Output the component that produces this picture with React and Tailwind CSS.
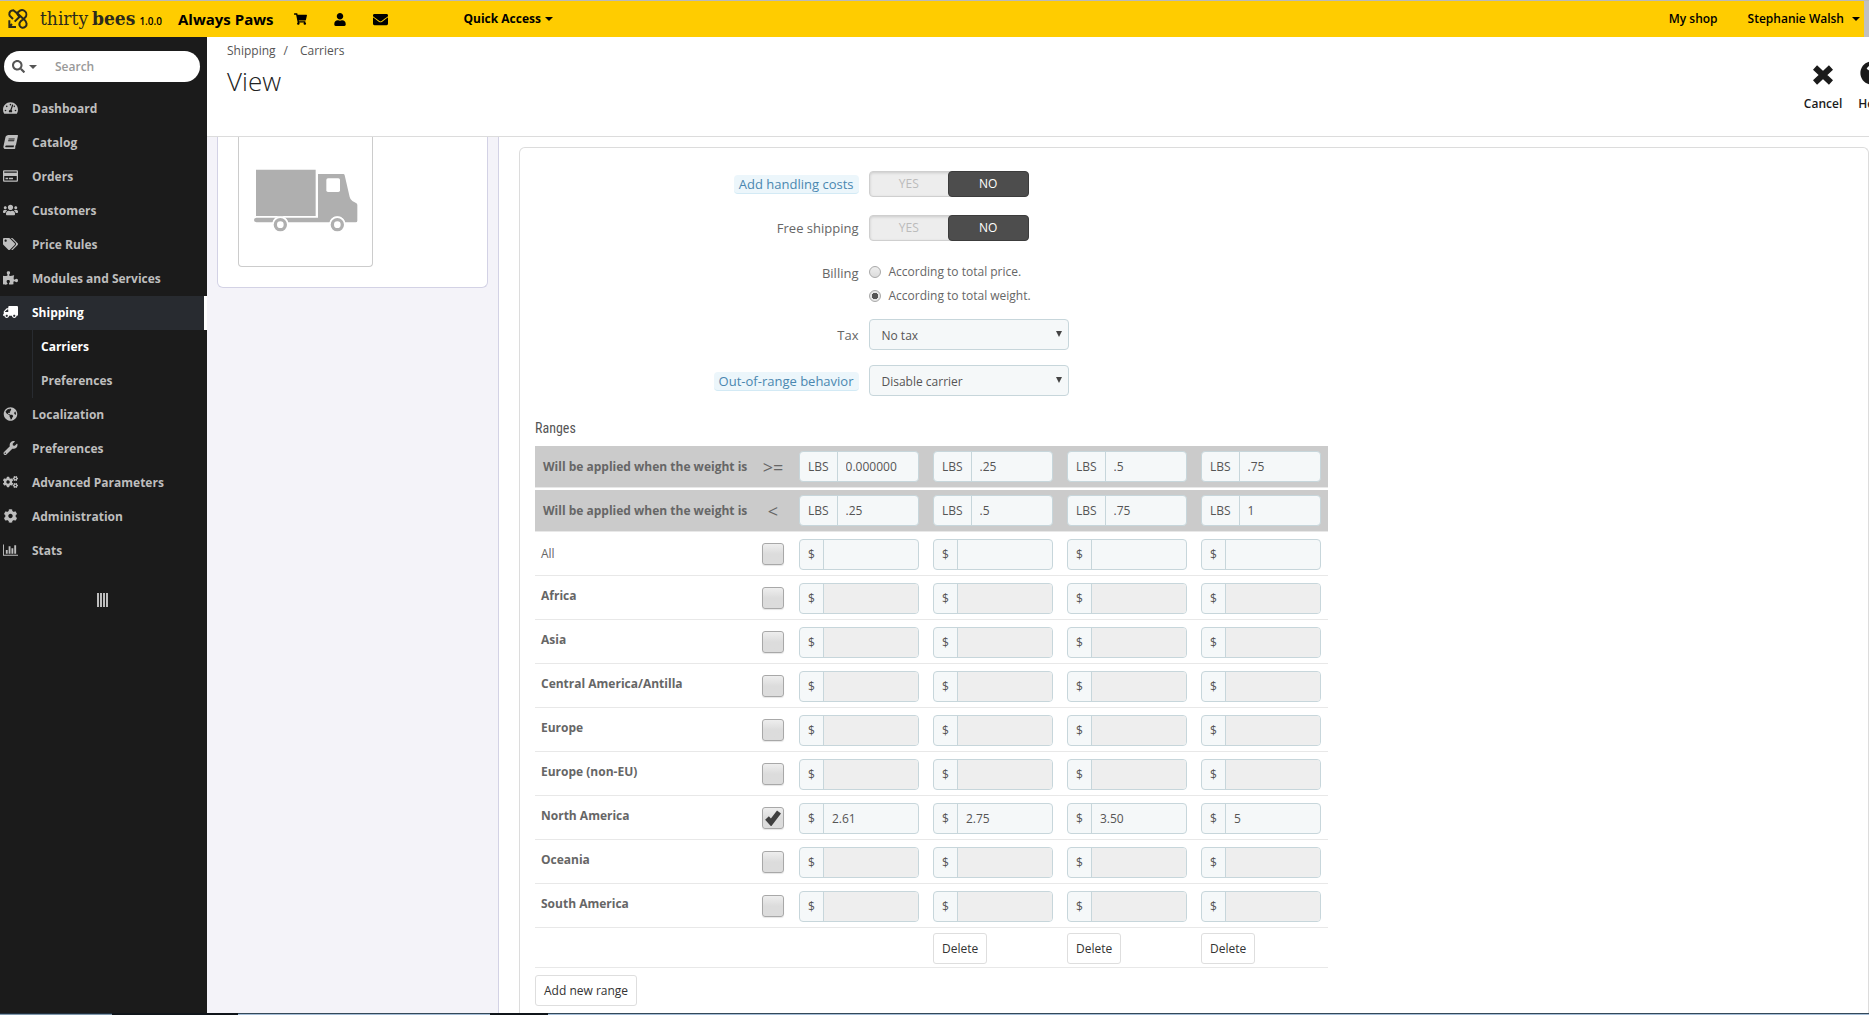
import React, { useState } from "react";
import clsx from "clsx";
import {
    FaBook,
    FaCog,
    FaCogs,
    FaEnvelope,
    FaGlobeAmericas,
    FaPuzzlePiece,
    FaQuestionCircle,
    FaRegCreditCard,
    FaSearch,
    FaShoppingCart,
    FaTachometerAlt,
    FaTags,
    FaTruck,
    FaUser,
    FaUsers,
    FaWrench,
} from "react-icons/fa";

const StatsIcon = ({ className }) => (
    <svg viewBox="0 0 16 12" fill="currentColor" className={className}>
        <path d="M0 0h1v11h15v1H0zM3 6h2v4H3zM6 2h2v8H6zM9 4h2v6H9zM12 1h2v9h-2z" />
    </svg>
);

const MENU = [
    { label: "Dashboard", icon: FaTachometerAlt },
    { label: "Catalog", icon: FaBook, iconClass: "-skew-x-12" },
    { label: "Orders", icon: FaRegCreditCard },
    { label: "Customers", icon: FaUsers },
    { label: "Price Rules", icon: FaTags },
    { label: "Modules and Services", icon: FaPuzzlePiece },
    { label: "Shipping", icon: FaTruck, iconClass: "-scale-x-100", children: ["Carriers", "Preferences"] },
    { label: "Localization", icon: FaGlobeAmericas },
    { label: "Preferences", icon: FaWrench },
    { label: "Advanced Parameters", icon: FaCogs },
    { label: "Administration", icon: FaCog },
    { label: "Stats", icon: StatsIcon },
];

const RANGES = [
    { from: "0.000000", to: ".25" },
    { from: ".25", to: ".5" },
    { from: ".5", to: ".75" },
    { from: ".75", to: "1" },
];

const ZONES = [
    { name: "Africa" },
    { name: "Asia" },
    { name: "Central America/Antilla" },
    { name: "Europe" },
    { name: "Europe (non-EU)" },
    { name: "North America", fees: ["2.61", "2.75", "3.50", "5"] },
    { name: "Oceania" },
    { name: "South America" },
];

const Caret = ({ className }) => (
    <svg viewBox="0 0 8 4" fill="currentColor" className={clsx("h-1 w-2", className)}>
        <path d="M0 0h8L4 4z" />
    </svg>
);

const LogoMark = () => (
    <svg viewBox="0 0 60 60" fill="none" stroke="#2b2a1c" strokeWidth="6" className="h-5 w-5">
        <path d="M4 18C3 9 8 4 16 4l10 8 8 12-14 14" />
        <path d="M3 18l12 12M27 12l9-7c5-3 12-1 16 3s4 12 0 17l-8 7" />
        <path d="M27 12l22 20c8 8 9 16 3 21s-14 4-17-3c-2-5-1-9 3-13l6-5" />
        <path d="M4 34v20h20M4 54l8-9" />
    </svg>
);

const TruckPicture = () => (
    <svg viewBox="160 148 312 189" fill="#afafaf" className="h-[63px] w-[104px]">
        <path d="M166 150h179v139H166z" />
        <path d="M352 163h76q3 0 4 4l15 65q2 8 8 12l11 6q4 2 4 6v47q0 5-5 5h-32a24 24 0 0 0-46 0H262a24 24 0 0 0-46 0h-49q-7-1-7-7t7-7h185z" />
        <rect x="377" y="176" width="41" height="41" rx="5" fill="#fff" />
        <circle cx="239" cy="315" r="25" fill="#fff" />
        <circle cx="410" cy="315" r="25" fill="#fff" />
        <circle cx="239" cy="315" r="15" fill="none" stroke="#afafaf" strokeWidth="10" />
        <circle cx="410" cy="315" r="15" fill="none" stroke="#afafaf" strokeWidth="10" />
    </svg>
);

const TopBar = () => (
    <header className="flex h-[37px] border-t border-[#b9b9b9] bg-[#c0c0c0] pr-[5px] text-black">
        <div className="flex flex-1 items-center bg-[#ffcc00] pl-2">
            <LogoMark />
            <a href="#" className="ml-3 flex items-baseline text-[#2b2a1c]">
                <span className="font-['DejaVu_Serif_Condensed','DejaVu_Serif',serif] text-[19px]">thirty</span>
                <span className="ml-1 font-['DejaVu_Serif_Condensed','DejaVu_Serif',serif] text-[19px] font-bold">
                    bees
                </span>
                <span className="ml-1 text-[10px] font-semibold text-black">1.0.0</span>
            </a>
            <a href="#" className="ml-4 text-[15px] font-bold">
                Always Paws
            </a>
            <a href="#" aria-label="Orders" className="ml-5">
                <FaShoppingCart className="h-3 w-[13px]" />
            </a>
            <a href="#" aria-label="Customers" className="ml-[26px]">
                <FaUser className="h-[13px] w-[14px]" />
            </a>
            <a href="#" aria-label="Messages" className="ml-[26px]">
                <FaEnvelope className="h-[15px] w-[15px]" />
            </a>
            <button type="button" className="ml-[76px] flex items-center gap-1 font-bold">
                Quick Access <Caret />
            </button>
            <a href="#" className="ml-auto font-semibold">
                My shop
            </a>
            <button type="button" className="mr-1 ml-[30px] flex items-center gap-2 font-semibold">
                Stephanie Walsh <Caret />
            </button>
        </div>
    </header>
);

const SideBar = () => (
    <nav className="w-[207px] shrink-0 bg-[#1b1b1b] text-[#bebebe]">
        <div className="mr-[7px] mt-[14px] mb-[10px] ml-1 flex h-[31px] items-center rounded-full bg-white pl-2 text-[#555]">
            <FaSearch className="h-[13px] w-[13px] shrink-0" />
            <Caret className="ml-1 shrink-0" />
            <input
                type="text"
                aria-label="Search"
                placeholder="Search"
                className="ml-[18px] w-32 font-semibold outline-none placeholder:text-[#999]"
            />
        </div>
        <ul>
            {MENU.map(({ label, icon: Icon, iconClass, children }) => (
                <li key={label} className={clsx(children && "text-white")}>
                    <a
                        href="#"
                        className={clsx(
                            "flex h-[34px] items-center pl-[3px] font-bold",
                            children && "border-r-[3px] border-white bg-[#282b30]"
                        )}
                    >
                        <Icon className={clsx("mr-[14px] mb-[2px] h-[14px] w-[15px] shrink-0", iconClass)} />
                        {label}
                    </a>
                    {children && (
                        <ul className="ml-8 border-l border-[#282b30] text-[#bebebe]">
                            {children.map((child, i) => (
                                <li key={child}>
                                    <a
                                        href="#"
                                        className={clsx("flex h-[34px] items-center pl-2 font-bold", i === 0 && "text-white")}
                                    >
                                        {child}
                                    </a>
                                </li>
                            ))}
                        </ul>
                    )}
                </li>
            ))}
        </ul>
        <button type="button" aria-label="Collapse menu" className="mt-[25px] ml-[97px] flex h-[14px] gap-px">
            {[0, 1, 2, 3].map((n) => (
                <span key={n} className="h-full w-[2px] bg-[#bebebe]" />
            ))}
        </button>
    </nav>
);

const PageHead = () => (
    <div className="flex h-[100px] justify-between overflow-hidden border-b border-[#dcdcdc] bg-white pl-5">
        <div>
            <div className="mt-[6px] flex text-[#555]">
                <a href="#">Shipping</a>
                <span className="mr-3 ml-2">/</span>
                <a href="#">Carriers</a>
            </div>
            <h1 className="mt-1 text-[26px] leading-9 font-light text-[#222]">View</h1>
        </div>
        <div className="-mr-4 flex gap-4 pt-6 text-[#1b1b1b]">
            <a href="#" className="flex flex-col items-center font-semibold">
                <svg viewBox="0 0 20 20" stroke="currentColor" strokeWidth="6" className="mt-1 mb-[11px] h-5 w-5">
                    <path d="M2 2.500l16 15M18 2.500l-16 15" />
                </svg>
                Cancel
            </a>
            <a href="#" className="flex flex-col items-center font-semibold">
                <FaQuestionCircle className="mb-[11px] h-6 w-6" />
                Help
            </a>
        </div>
    </div>
);

const HintLabel = ({ hint, children }) =>
    hint ? (
        <span className="rounded-sm border-b border-[#d3eaf5] bg-[#ecf6fb] px-[5px] text-[#4a87b0]">{children}</span>
    ) : (
        children
    );

const FormRow = ({ label, htmlFor, hint, tall, className, children }) => (
    <div className={clsx("grid grid-cols-[25%_1fr]", className)}>
        <label
            htmlFor={htmlFor}
            className={clsx(
                "flex items-center justify-end pr-[6px] text-[13px] leading-[18px]",
                tall ? "h-8" : "h-[26px]"
            )}
        >
            <HintLabel hint={hint}>{label}</HintLabel>
        </label>
        <div className="pl-1">{children}</div>
    </div>
);

const YesNoSwitch = ({ name }) => {
    const [value, setValue] = useState("NO");

    return (
        <div className="relative flex h-[26px] w-40 rounded-sm border border-[#cfcfcf] bg-[#ededed] shadow-[inset_0_1px_3px_rgba(0,0,0,0.15)]">
            {["YES", "NO"].map((option) => (
                <label
                    key={option}
                    className={clsx(
                        "-my-px flex flex-1 items-center justify-center leading-4",
                        value === option ? "-mr-px rounded-sm border border-[#3c3c3c] bg-[#4d4d4d] text-white" : "text-[#bbb]"
                    )}
                >
                    <input
                        type="radio"
                        id={option === "YES" ? name : undefined}
                        name={name}
                        checked={value === option}
                        onChange={() => setValue(option)}
                        className="sr-only"
                    />
                    {option}
                </label>
            ))}
        </div>
    );
};

const SelectBox = ({ id, options }) => (
    <div className="relative w-[200px]">
        <select
            id={id}
            className="block h-[31px] w-full appearance-none rounded-sm border border-[#c7d6db] bg-[#f5f8f9] px-3 pt-[2px] text-[#555]"
        >
            {options.map((option) => (
                <option key={option}>{option}</option>
            ))}
        </select>
        <svg viewBox="0 0 6 6" fill="#444" className="pointer-events-none absolute top-3 right-[7px] h-[6px] w-[6px]">
            <path d="M0 0h6L3 6z" />
        </svg>
    </div>
);

const AddonInput = ({ addon, label, disabled, value = "" }) => (
    <div className="flex h-[31px] overflow-hidden rounded-sm border border-[#c7d6db] bg-[#f5f8f9] text-[#555]">
        <span className="flex items-center border-r border-[#c7d6db] px-2">{addon}</span>
        <input
            type="text"
            aria-label={label}
            defaultValue={value}
            disabled={disabled}
            className="min-w-0 flex-1 px-2 outline-none disabled:bg-[#eee]"
        />
    </div>
);

const ZoneCheckbox = ({ id, defaultChecked }) => (
    <span className="relative mx-auto block h-[22px] w-[22px]">
        <input
            type="checkbox"
            id={id}
            defaultChecked={defaultChecked}
            className="peer block h-full w-full appearance-none rounded-[3px] border border-[#a8a8a8] bg-linear-to-b from-[#eee] to-[#dcdcdc] to-50% shadow-[0_1px_1px_rgba(0,0,0,0.1)]"
        />
        <svg
            viewBox="0 0 16 16"
            fill="none"
            stroke="#3f3f3f"
            strokeWidth="5"
            className="pointer-events-none absolute top-[3px] left-[3px] hidden h-4 w-4 peer-checked:block"
        >
            <path d="M2 8l4 4.500L14 2" />
        </svg>
    </span>
);

const RangeHead = ({ symbol, field, className }) => (
    <tr>
        <th
            scope="row"
            className={clsx("border-b border-[#e8e8e8] bg-[#cbcbcb] bg-clip-padding pl-2 text-left font-bold", className)}
        >
            Will be applied when the weight is
        </th>
        <td className={clsx("border-b border-[#e8e8e8] bg-[#cbcbcb] bg-clip-padding text-center text-lg leading-6", className)}>
            {symbol}
        </td>
        {RANGES.map((range, i) => (
            <td
                key={i}
                className={clsx("border-b border-[#e8e8e8] bg-[#cbcbcb] bg-clip-padding px-[7px] py-[5px] text-xs", className)}
            >
                <AddonInput addon="LBS" label={`Range ${i + 1} weight ${symbol}`} value={range[field]} />
            </td>
        ))}
    </tr>
);

const RangesTable = () => (
    <table className="w-[793px] table-fixed border-separate border-spacing-0 text-[#666]">
        <colgroup>
            <col />
            <col className="w-[38px]" />
            {RANGES.map((_, i) => (
                <col key={i} className="w-[134px]" />
            ))}
        </colgroup>
        <tbody>
            <RangeHead symbol=">=" field="from" />
            <RangeHead symbol="<" field="to" className="border-t-2 border-t-white" />
            <tr>
                <td className="border-b border-[#e8e8e8] pl-[6px]">
                    <label htmlFor="zone-all">All</label>
                </td>
                <td className="border-b border-[#e8e8e8]">
                    <ZoneCheckbox id="zone-all" />
                </td>
                {RANGES.map((_, i) => (
                    <td key={i} className="border-b border-[#e8e8e8] px-[7px] pt-[7px] pb-[5px]">
                        <AddonInput addon="$" label={`All zones, range ${i + 1}`} />
                    </td>
                ))}
            </tr>
            {ZONES.map(({ name, fees }) => (
                <tr key={name}>
                    <th scope="row" className="border-b border-[#e8e8e8] pb-1 pl-[6px] text-left font-bold">
                        <label htmlFor={name}>{name}</label>
                    </th>
                    <td className="border-b border-[#e8e8e8]">
                        <ZoneCheckbox id={name} defaultChecked={Boolean(fees)} />
                    </td>
                    {RANGES.map((_, i) => (
                        <td key={i} className="border-b border-[#e8e8e8] px-[7px] pt-[7px] pb-[5px]">
                            <AddonInput addon="$" label={`${name}, range ${i + 1}`} value={fees?.[i]} disabled={!fees} />
                        </td>
                    ))}
                </tr>
            ))}
            <tr>
                <td colSpan={3} className="border-b border-[#e8e8e8]" />
                {[1, 2, 3].map((i) => (
                    <td key={i} className="border-b border-[#e8e8e8] px-[7px] pt-[5px] pb-[3px]">
                        <button
                            type="button"
                            className="block h-[31px] rounded-[3px] border border-[#dedede] bg-white px-2 text-[#333]"
                        >
                            Delete
                        </button>
                    </td>
                ))}
            </tr>
        </tbody>
    </table>
);

const CarrierForm = () => (
    <form className="mt-[10px] flex-1 rounded-t-md border border-b-0 border-[#dcdcdc] px-[15px] pt-[23px] pb-1 text-[#666]">
        <FormRow label="Add handling costs" htmlFor="handling" hint>
            <YesNoSwitch name="handling" />
        </FormRow>
        <FormRow label="Free shipping" htmlFor="free" className="mt-[18px]">
            <YesNoSwitch name="free" />
        </FormRow>
        <FormRow label="Billing" htmlFor="billing-price" className="mt-[19px]">
            {["price", "weight"].map((kind) => (
                <label key={kind} className="flex h-6 items-center gap-2">
                    <input
                        type="radio"
                        id={`billing-${kind}`}
                        name="billing"
                        defaultChecked={kind === "weight"}
                        className="h-3 w-3 appearance-none rounded-full border border-[#a8a8a8] bg-linear-to-b from-[#eee] to-[#dcdcdc] checked:bg-[radial-gradient(circle,#555_0_3px,#e6e6e6_3px)]"
                    />
                    According to total {kind}.
                </label>
            ))}
        </FormRow>
        <FormRow label="Tax" htmlFor="tax" tall className="mt-[11px]">
            <SelectBox id="tax" options={["No tax"]} />
        </FormRow>
        <FormRow label="Out-of-range behavior" htmlFor="behavior" hint tall className="mt-[14px]">
            <SelectBox id="behavior" options={["Disable carrier", "Apply the cost of the highest defined range"]} />
        </FormRow>
        <h2 className="mt-[21px] mb-2 font-['Liberation_Sans_Narrow','Roboto_Condensed','Open_Sans',sans-serif] text-sm leading-5 text-[#555]">
            Ranges
        </h2>
        <RangesTable />
        <button
            type="button"
            className="mt-[7px] block h-[31px] rounded-[3px] border border-[#dedede] bg-white px-2 text-[#333]"
        >
            Add new range
        </button>
    </form>
);

const BottomStrip = () => (
    <div className="flex h-[2px]">
        <div className="w-[112px] border-t border-[#22313f] bg-[#7f97ab]" />
        <div className="w-[126px] bg-[#10151a]" />
        <div className="w-[252px] border-t border-[#34495a] bg-[#a5bdd6]" />
        <div className="w-[58px] bg-[#10151a]" />
        <div className="flex-1 border-t border-[#34495a] bg-[#a5bdd6]" />
    </div>
);

const App = () => (
    <div className="flex min-h-screen flex-col overflow-hidden bg-white font-['Open_Sans',sans-serif] text-xs">
        <TopBar />
        <div className="flex flex-1">
            <SideBar />
            <main className="flex min-w-0 flex-1 flex-col">
                <PageHead />
                <div className="flex flex-1">
                    <aside className="w-[291px] shrink-0 bg-[#f4f3f9] px-[10px]">
                        <div className="rounded-b-md border border-t-0 border-[#d3d2e5] bg-white px-5 pb-5">
                            <div className="flex w-[135px] justify-center rounded-b-sm border border-t-0 border-[#ccc] pt-8 pb-[34px]">
                                <TruckPicture />
                            </div>
                        </div>
                    </aside>
                    <section className="flex flex-1 flex-col border-l border-[#d3d2e5] pl-5">
                        <CarrierForm />
                    </section>
                </div>
            </main>
        </div>
        <BottomStrip />
    </div>
);

export default App;
